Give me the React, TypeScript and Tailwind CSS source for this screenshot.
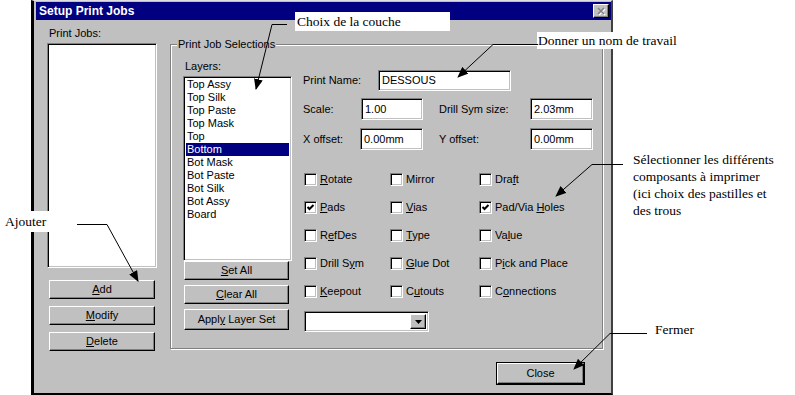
import type { ReactNode } from 'react'

const sunken =
  'border border-t-[#808080] border-l-[#808080] border-b-white border-r-white shadow-[inset_1px_1px_0_#000,inset_-1px_-1px_0_#c0c0c0]'
const raised =
  'border border-t-white border-l-white border-b-black border-r-black shadow-[inset_-1px_-1px_0_#808080]'

const layers = ['Top Assy', 'Top Silk', 'Top Paste', 'Top Mask', 'Top', 'Bottom', 'Bot Mask', 'Bot Paste', 'Bot Silk', 'Bot Assy', 'Board']

function U({ children }: { children: ReactNode }) {
  return <span className="underline underline-offset-[1px]">{children}</span>
}

function Btn({ children, className = '' }: { children: ReactNode; className?: string }) {
  return (
    <div className={`flex items-center justify-center bg-[#c0c0c0] text-black ${raised} ${className}`}>
      <span>{children}</span>
    </div>
  )
}

function Field({ value, className = '' }: { value?: string; className?: string }) {
  return (
    <div className={`flex items-center bg-white pl-[3px] ${sunken} ${className}`}>{value}</div>
  )
}

function Check({ label, checked }: { label: ReactNode; checked?: boolean }) {
  return (
    <div className="flex items-center h-[13px]">
      <div className={`w-[13px] h-[13px] bg-white ${sunken} flex items-center justify-center`}>
        {checked && (
          <svg width="9" height="9" viewBox="0 0 9 9">
            <path d="M1.5 4 L3.5 6 L7.5 2" stroke="#000" strokeWidth="2" fill="none" />
          </svg>
        )}
      </div>
      <span className="ml-[3px] leading-[13px]">{label}</span>
    </div>
  )
}

export default function App() {
  return (
    <div className="relative w-[795px] h-[395px] bg-white overflow-hidden font-['Liberation_Sans',Arial,sans-serif] text-[11px] text-black">
      {/* dialog */}
      <div className="ml-[31px] w-[582px] h-[395px] bg-[#c0c0c0] border-t border-t-[#dfdfdf] border-l-[3px] border-l-black border-r-[2px] border-r-[#404040] border-b-[2px] border-b-black pt-[1px] pl-[2px]">
        <div className="h-[18px] w-[575px] bg-[#000080] flex items-center justify-between pl-[3px] pr-[2px]">
          <span className="text-white font-bold text-[12px] leading-[14px]">Setup Print Jobs</span>
          <div className={`w-[16px] h-[14px] bg-[#c0c0c0] ${raised} flex items-center justify-center`}>
            <svg width="10" height="9" viewBox="0 0 10 9">
              <path d="M2 1 L8 7 M8 1 L2 7" stroke="#fff" strokeWidth="1.6" transform="translate(1 1)" />
              <path d="M2 1 L8 7 M8 1 L2 7" stroke="#808080" strokeWidth="1.6" />
            </svg>
          </div>
        </div>

        <div className="flex pl-[11px]">
          {/* left column */}
          <div className="w-[110px] pt-[7px]">
            <div className="h-[13px] leading-[13px] pl-[2px]">Print Jobs:</div>
            <div className={`mt-[3px] h-[225px] bg-white ${sunken}`} />
            <div className="mt-[12px] ml-[2px] flex flex-col gap-[7px]">
              <Btn className="w-[106px] h-[19px]"><U>A</U>dd</Btn>
              <Btn className="w-[106px] h-[19px]"><U>M</U>odify</Btn>
              <Btn className="w-[106px] h-[19px]"><U>D</U>elete</Btn>
            </div>
          </div>

          {/* right column */}
          <div className="ml-[13px] w-[433px] flex flex-col">
            <div className="relative mt-[24px] h-[305px] border border-[#808080] shadow-[inset_1px_1px_0_#fff,1px_1px_0_#fff]">
              <span className="absolute -top-[7px] left-[6px] px-[1px] bg-[#c0c0c0] leading-[13px]">Print Job Selections</span>
              <div className="flex pl-[12px]">
                {/* layers */}
                <div className="w-[109px] pt-[15px]">
                  <div className="h-[13px] leading-[13px] pl-[2px]">Layers:</div>
                  <div className={`mt-[3px] h-[185px] bg-white ${sunken} p-[2px] pt-[1px]`}>
                    {layers.map((l) => (
                      <div
                        key={l}
                        className={`h-[13px] leading-[13px] pl-[1px] ${l === 'Bottom' ? 'bg-[#000080] text-white' : ''}`}
                      >
                        {l}
                      </div>
                    ))}
                  </div>
                  <div className="ml-[1px] flex flex-col">
                    <Btn className="w-[105px] h-[19px]"><U>S</U>et All</Btn>
                    <Btn className="w-[105px] h-[19px] mt-[5px]"><U>C</U>lear All</Btn>
                    <Btn className="w-[105px] h-[21px] mt-[5px]">Appl<U>y</U> Layer Set</Btn>
                  </div>
                </div>

                {/* settings */}
                <div className="ml-[11px] pt-[25px]">
                  <div className="flex items-center h-[21px]">
                    <span className="w-[75px]">Print Name:</span>
                    <Field value="DESSOUS" className="w-[133px] h-[21px]" />
                  </div>
                  <div className="flex items-center h-[22px] mt-[7px]">
                    <span className="w-[58px]">Scale:</span>
                    <Field value="1.00" className="w-[62px] h-[22px]" />
                    <span className="w-[91px] ml-[16px]">Drill Sym size:</span>
                    <Field value="2.03mm" className="w-[63px] h-[22px]" />
                  </div>
                  <div className="flex items-center h-[22px] mt-[8px]">
                    <span className="w-[57px]">X offset:</span>
                    <Field value="0.00mm" className="w-[63px] h-[22px]" />
                    <span className="w-[91px] ml-[16px]">Y offset:</span>
                    <Field value="0.00mm" className="w-[63px] h-[22px]" />
                  </div>

                  <div className="mt-[23px] ml-[1px] grid grid-cols-[86px_89px_120px] gap-y-[15px]">
                    <Check label={<><U>R</U>otate</>} />
                    <Check label="Mirror" />
                    <Check label={<>Dra<U>f</U>t</>} />
                    <Check checked label={<><U>P</U>ads</>} />
                    <Check label={<><U>V</U>ias</>} />
                    <Check checked label={<>Pad/Via <U>H</U>oles</>} />
                    <Check label={<>R<U>e</U>fDes</>} />
                    <Check label={<><U>T</U>ype</>} />
                    <Check label={<>Va<U>l</U>ue</>} />
                    <Check label={<>Drill S<U>y</U>m</>} />
                    <Check label={<><U>G</U>lue Dot</>} />
                    <Check label={<>P<U>i</U>ck and Place</>} />
                    <Check label={<><U>K</U>eepout</>} />
                    <Check label={<>C<U>u</U>touts</>} />
                    <Check label={<>C<U>o</U>nnections</>} />
                  </div>

                  <div className={`mt-[13px] ml-[1px] w-[125px] h-[21px] bg-white ${sunken} flex justify-end p-[2px]`}>
                    <div className={`w-[16px] h-full bg-[#c0c0c0] ${raised} flex items-center justify-center`}>
                      <svg width="7" height="4" viewBox="0 0 7 4">
                        <path d="M0 0 H7 L3.5 4 Z" fill="#000" />
                      </svg>
                    </div>
                  </div>
                </div>
              </div>
            </div>

            <div className="mt-[13px] mr-[18px] self-end border border-black">
              <Btn className="w-[87px] h-[21px]">Close</Btn>
            </div>
          </div>
        </div>
      </div>

      {/* annotations */}
      <div className="absolute left-[295px] top-[12px] w-[155px] h-[19px] bg-white pl-[2px] font-['Liberation_Serif',serif] text-[13.5px] leading-[19px]">
        Choix de la couche
      </div>
      <div className="absolute left-[537px] top-[32px] w-[146px] h-[17px] bg-white pl-[1px] font-['Liberation_Serif',serif] text-[13.5px] leading-[17px]">
        Donner un nom de travail
      </div>
      <div className="absolute left-0 top-[211px] w-[72px] h-[21px] bg-white pl-[5px] font-['Liberation_Serif',serif] text-[13.5px] leading-[21px]">
        Ajouter
      </div>
      <div className="absolute left-[633px] top-[151px] font-['Liberation_Serif',serif] text-[13.5px] leading-[17px]">
        <div>Sélectionner les différents</div>
        <div>composants à imprimer</div>
        <div>(ici choix des pastilles et</div>
        <div>des trous</div>
      </div>
      <div className="absolute left-[655px] top-[321px] font-['Liberation_Serif',serif] text-[13.5px] leading-[17px]">
        Fermer
      </div>

      <svg className="absolute left-0 top-0 pointer-events-none" width="795" height="395">
        <defs>
          <marker id="ah" markerWidth="11" markerHeight="9" refX="10" refY="4.5" orient="auto" markerUnits="userSpaceOnUse">
            <path d="M0 0 L11 4.5 L0 9 Z" fill="#000" />
          </marker>
        </defs>
        <g stroke="#000" strokeWidth="1" fill="none">
          <polyline points="287,24.5 272,24.5 256,89" markerEnd="url(#ah)" />
          <polyline points="538,44.5 493,44.5 458,77" markerEnd="url(#ah)" />
          <polyline points="623,164.5 592,164.5 556,196" markerEnd="url(#ah)" />
          <polyline points="77,224.5 107,224.5 138,281" markerEnd="url(#ah)" />
          <polyline points="647,333.5 610,333.5 574,369" markerEnd="url(#ah)" />
        </g>
      </svg>
    </div>
  )
}
